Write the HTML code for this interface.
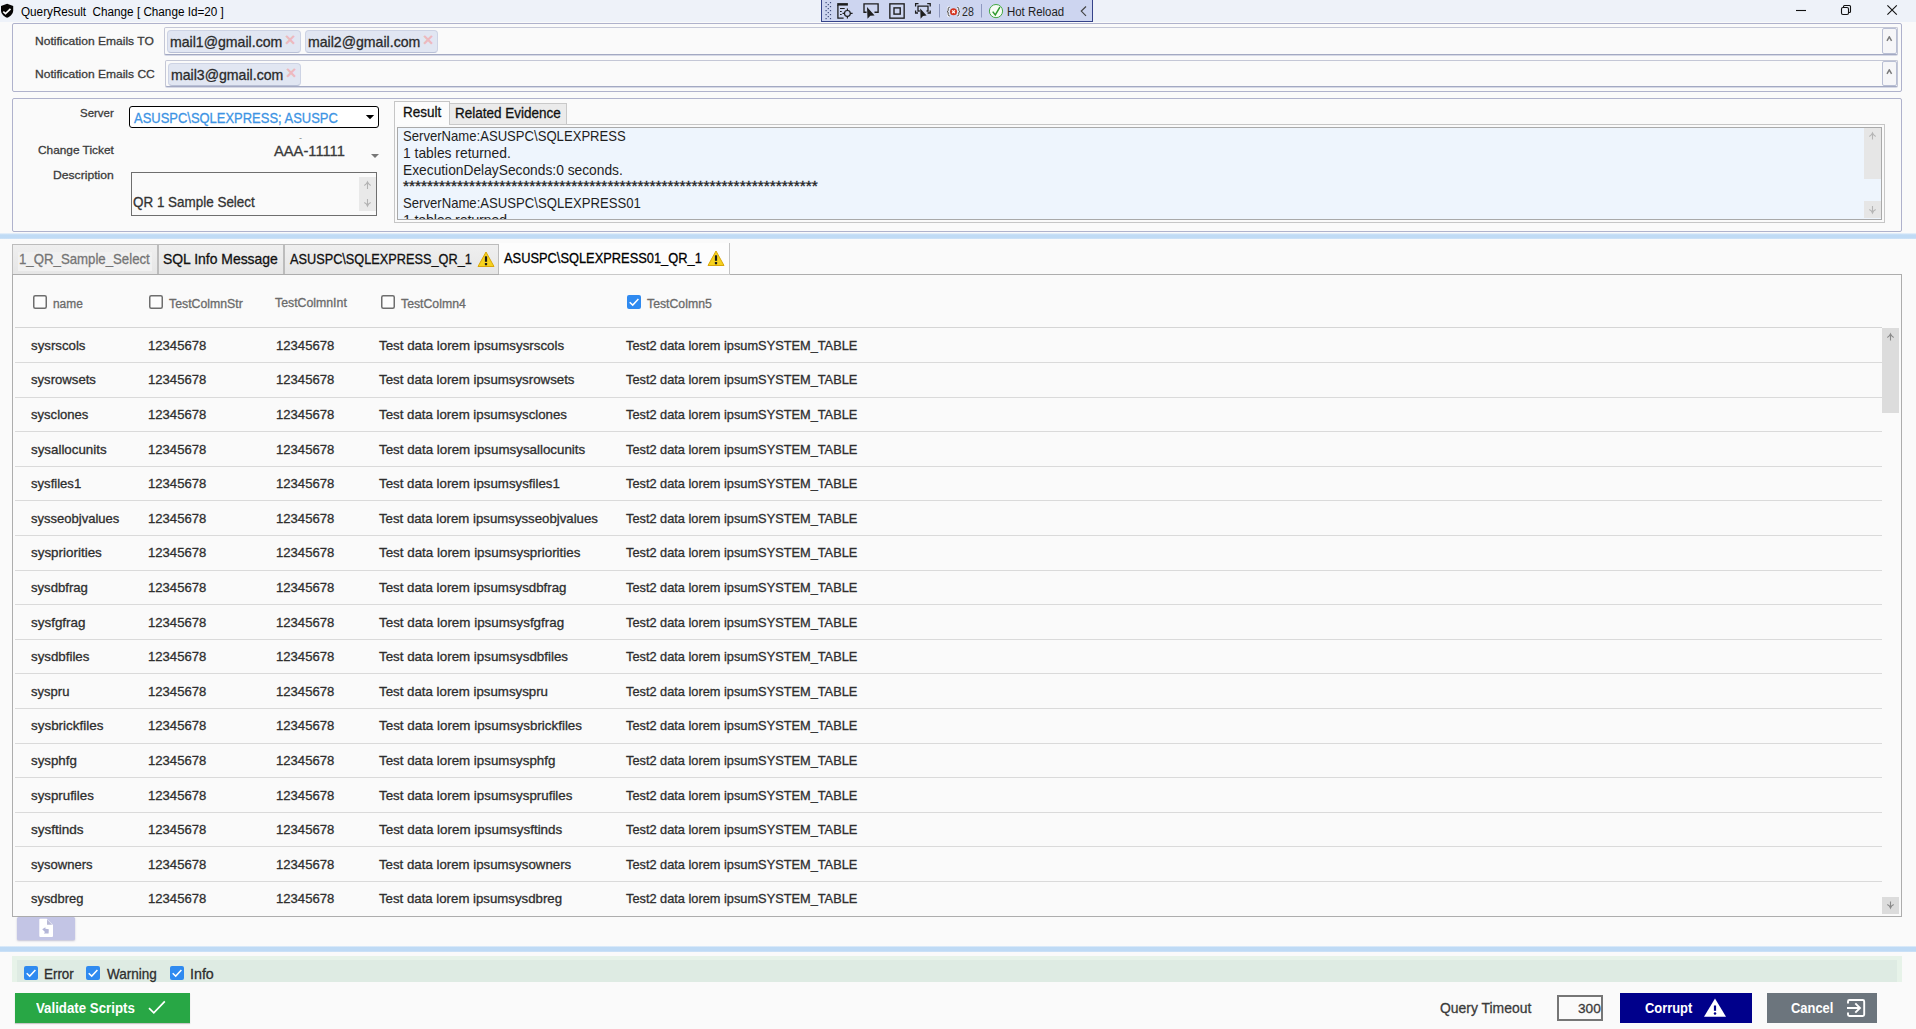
<!DOCTYPE html><html><head><meta charset="utf-8"><title>QueryResult Change</title><style>
html,body{margin:0;padding:0}
body{width:1916px;height:1029px;position:relative;overflow:hidden;background:#fafafa;font-family:"Liberation Sans",sans-serif}
body>div,body>svg,body>span{position:absolute;box-sizing:border-box}
body>div>div,body>div>svg{position:absolute;box-sizing:border-box}
span.t{white-space:pre;display:inline-block;transform-origin:0 50%}
.m{-webkit-text-stroke:0.3px currentColor}

</style></head><body>
<div style="left:0px;top:0px;width:1916px;height:22px;background:#eef2f9"></div>
<svg style="left:0;top:0" width="15" height="22" viewBox="0 0 15 22"><path d="M7.100 3.800 L13.200 6 V10.300 C13.200 13.900 10.600 16.500 7.100 17.800 C3.600 16.500 1 13.900 1 10.300 V6 Z" fill="#050505"/><path d="M3.300 11.700 L5.500 13.700 L10.500 8.800" fill="none" stroke="#fff" stroke-width="1.700"/></svg>
<svg style="left:1790px;top:0" width="120" height="23" viewBox="0 0 120 23"><g fill="none" stroke="#111" stroke-width="1.1"><path d="M6 10.5 H16"/><rect x="51.5" y="7.5" width="7" height="7" rx="1.5"/><path d="M53.5 7.5 V6.5 Q53.5 5.5 54.5 5.5 H59.5 Q60.5 5.5 60.5 6.5 V11.5 Q60.5 12.5 59.5 12.5 H58.5"/><path d="M97.400 5.300 L106.800 14.700 M106.800 5.300 L97.400 14.700"/></g></svg>
<div style="left:821px;top:0px;width:272px;height:22px;background:#cdd5f0;border:1px solid #35438a;border-top:none"></div>
<svg style="left:821px;top:0" width="272" height="22" viewBox="0 0 272 22">
<g fill="#3d4a78"><rect x="4.5" y="2" width="1.2" height="1.2"/><rect x="8.9" y="2" width="1.2" height="1.2"/><rect x="6.7" y="4" width="1.2" height="1.2"/><rect x="4.5" y="6" width="1.2" height="1.2"/><rect x="8.9" y="6" width="1.2" height="1.2"/><rect x="6.7" y="8" width="1.2" height="1.2"/><rect x="4.5" y="10" width="1.2" height="1.2"/><rect x="8.9" y="10" width="1.2" height="1.2"/><rect x="6.7" y="12" width="1.2" height="1.2"/><rect x="4.5" y="14" width="1.2" height="1.2"/><rect x="8.9" y="14" width="1.2" height="1.2"/><rect x="6.7" y="16" width="1.2" height="1.2"/><rect x="4.5" y="18" width="1.2" height="1.2"/><rect x="8.9" y="18" width="1.2" height="1.2"/></g>
<g fill="none" stroke="#1e1e1e" stroke-width="1.350">
<path d="M16.200 4.350 H26.900" stroke-width="2.500"/><path d="M16.900 5 V18.200 H22.600" stroke-width="1.300"/><path d="M19 8.500 H23.700 M19 11.500 H20.700 M19 14.500 H20.700" stroke-width="1"/><circle cx="26.400" cy="13.400" r="2.900" stroke-width="1.150"/><path d="M26.400 8.500 V10.800 M26.400 16 V18.600 M21.500 13.400 H23.800 M29 13.400 H31.600" stroke-width="1.150"/>
<path d="M45.600 12.200 H43 V3.800 H57.100 V12.200 H53.500"/>
<rect x="68.850" y="3.850" width="14.300" height="14.300"/><rect x="73" y="7.900" width="6.200" height="6.200" stroke-width="1.400"/>
<path d="M94.600 6.500 V3.700 H97.500 M106.200 3.700 H109.200 V6.500 M109.200 10.500 V13 H106.500 M94.600 10.500 V13 H97" stroke-width="1.300"/><path d="M98.800 11 H97 V6.200 H107 V11 H105.500" stroke-width="1.300"/>
</g>
<path d="M46 7 L46.500 18.700 L49.300 15.700 L53.600 15.400 Z" fill="#1e1e1e"/>
<path d="M99.200 8.600 L99.600 18.700 L102 16 L105.600 15.400 Z" fill="#1e1e1e"/>
<path d="M118.500 4 V17.500 M160.500 4 V17.500" stroke="#8e98bf" stroke-width="1"/>
<path d="M128.800 7.200 Q127.200 7.200 127.200 8.800 V10.200 Q127.200 11.600 126.100 11.600 Q127.200 11.600 127.200 13 V14.400 Q127.200 16 128.800 16 M136.200 7.200 Q137.800 7.200 137.800 8.800 V10.200 Q137.800 11.600 138.900 11.600 Q137.800 11.600 137.800 13 V14.400 Q137.800 16 136.200 16" fill="none" stroke="#f3f3f8" stroke-width="2.600"/>
<path d="M128.800 7.200 Q127.200 7.200 127.200 8.800 V10.200 Q127.200 11.600 126.100 11.600 Q127.200 11.600 127.200 13 V14.400 Q127.200 16 128.800 16 M136.200 7.200 Q137.800 7.200 137.800 8.800 V10.200 Q137.800 11.600 138.900 11.600 Q137.800 11.600 137.800 13 V14.400 Q137.800 16 136.200 16" fill="none" stroke="#4a4a4a" stroke-width="1"/>
<circle cx="132.500" cy="11.700" r="3.500" fill="#d4341f"/><path d="M131.100 10.300 L133.900 13.100 M133.900 10.300 L131.100 13.100" stroke="#fff" stroke-width="1.200"/>
<circle cx="175" cy="11.100" r="6.600" fill="#f7fcf5" stroke="#43a843" stroke-width="1"/><path d="M171.700 11.600 L174.300 15 L178.900 7.200" fill="none" stroke="#2f9a2f" stroke-width="1.500"/>
<path d="M265 6.500 L260.300 11.100 L265 15.800" fill="none" stroke="#444" stroke-width="1.200"/>
</svg>
<div style="left:12px;top:23px;width:1890px;height:69px;border:1px solid #afb2cc;border-radius:2px;background:#fafafa"></div>
<div style="left:164px;top:27px;width:1734px;height:28px;border:1px solid #c4c7d6;border-bottom:1px solid #a3a9c2;border-radius:2px;background:#fafafa;box-shadow:0 1px 0 #d6d9e6"></div>
<div style="left:167px;top:30px;width:134px;height:23px;background:#e1e6f2;border:1px solid #cdd3e4;border-bottom-color:#b9c0d6;border-radius:4px"></div>
<div style="left:305px;top:30px;width:133px;height:23px;background:#e1e6f2;border:1px solid #cdd3e4;border-bottom-color:#b9c0d6;border-radius:4px"></div>
<div style="left:1882px;top:28px;width:15px;height:26px;border:1px solid #b9bfd4;border-radius:2px;background:#f6f6f8"></div>
<svg style="left:1886px;top:36px" width="7" height="6" viewBox="0 0 7 6"><path d="M1 4.900 L3.300 0.900 L5.600 4.900" fill="none" stroke="#7a7a7a" stroke-width="1.500"/></svg>
<div style="left:165px;top:60px;width:1733px;height:27px;border:1px solid #c4c7d6;border-bottom:1px solid #a3a9c2;border-radius:2px;background:#fafafa;box-shadow:0 1px 0 #d6d9e6"></div>
<div style="left:168px;top:63px;width:133px;height:23px;background:#e1e6f2;border:1px solid #cdd3e4;border-bottom-color:#b9c0d6;border-radius:4px"></div>
<div style="left:1882px;top:61px;width:15px;height:25px;border:1px solid #b9bfd4;border-radius:2px;background:#f6f6f8"></div>
<svg style="left:1886px;top:69px" width="7" height="6" viewBox="0 0 7 6"><path d="M1 4.900 L3.300 0.900 L5.600 4.900" fill="none" stroke="#7a7a7a" stroke-width="1.500"/></svg>
<div style="left:12px;top:98px;width:1890px;height:134px;border:1px solid #afb2cc;border-radius:2px;background:#fafafa"></div>
<div style="left:129px;top:106px;width:250px;height:22px;border:1px solid #000;border-radius:3px;background:#fff"></div>
<svg style="left:365px;top:114px" width="10" height="6" viewBox="0 0 10 6"><path d="M0.800 1 H9.200 L5 5.300 Z" fill="#000"/></svg>
<svg style="left:370px;top:153px" width="10" height="6" viewBox="0 0 10 6"><path d="M1 1 H9 L5 5 Z" fill="#777"/></svg>
<div style="left:131px;top:172px;width:246px;height:44px;border:1px solid #6e6e6e;background:#fafafa"></div>
<div style="left:359px;top:177px;width:17px;height:34px;background:#e9e9e9"></div>
<svg style="left:359px;top:177px" width="16" height="34" viewBox="0 0 16 34" fill="none" stroke="#b2b2b2" stroke-width="1.1"><path d="M8.5 5 V12 M5.3 8.4 Q7.7 7.2 8.5 5 Q9.3 7.2 11.7 8.4"/><path d="M8.5 22 V29 M5.3 25.6 Q7.7 26.8 8.5 29 Q9.3 26.8 11.7 25.6"/></svg>
<div style="left:394px;top:124px;width:1491px;height:99px;border:1px solid #c6c6c6;background:#fafafa"></div>
<div style="left:450px;top:103px;width:117px;height:22px;background:#ebebeb;border:1px solid #c9c9c9;border-left:none"></div>
<div style="left:394px;top:101px;width:56px;height:24px;background:#fcfcfc;border:1px solid #c6c6c6;border-bottom:none"></div>
<div style="left:397px;top:127px;width:1485px;height:93px;border:1px solid #a9a9a9;background:#eef5fd;overflow:hidden"></div>
<div style="left:397px;top:211px;width:300px;height:8px;overflow:hidden"><span id="clip1" style="position:absolute;left:6px;top:-1px;font-size:14.500px;line-height:20px;color:#1e1e1e;white-space:pre;letter-spacing:-0.300px">1 tables returned.</span></div>
<div style="left:1864px;top:128px;width:17px;height:51px;background:#e6e6e6"></div>
<div style="left:1864px;top:201px;width:17px;height:17px;background:#e6e6e6"></div>
<svg style="left:1864px;top:130px" width="17" height="88" viewBox="0 0 17 88" fill="none" stroke="#b5b5b5" stroke-width="1.1"><path d="M8.5 3 V9.5 M5.3 6.4 Q7.7 5.2 8.5 3 Q9.3 5.2 11.7 6.4"/><path d="M8.5 76 V83 M5.3 79.6 Q7.7 80.8 8.5 83 Q9.3 80.8 11.7 79.6"/></svg>
<div style="left:0px;top:233px;width:1916px;height:6px;background:linear-gradient(#eef4fb,#c0dbf5 30%,#c0dbf5 85%,#d8e8f8)"></div>
<div style="left:0px;top:946px;width:1916px;height:6px;background:linear-gradient(#e6f0fa,#bedaf5 25%,#bedaf5 85%,#d8e8f8)"></div>
<div style="left:12px;top:244px;width:146px;height:31px;background:linear-gradient(#efefef,#e6e6e6);border:1px solid #bcbcbc"></div>
<div style="left:158px;top:244px;width:126px;height:31px;background:linear-gradient(#efefef,#e6e6e6);border:1px solid #bcbcbc"></div>
<div style="left:284px;top:244px;width:215px;height:31px;background:linear-gradient(#efefef,#e6e6e6);border:1px solid #bcbcbc"></div>
<div style="left:18px;top:252px;width:134px;height:19px;background:#f1f1f1"></div>
<div style="left:12px;top:274px;width:1890px;height:643px;border:1px solid #adadad;background:#fafafa"></div>
<div style="left:499px;top:243px;width:231px;height:31px;background:#fdfdfd;border-right:1px solid #c4c4c4"></div>
<div style="left:499px;top:274px;width:231px;height:1px;background:#c9c9c9"></div>
<svg style="left:477px;top:251px" width="18" height="17" viewBox="0 0 18 17"><path d="M9 1 L17 15.500 H1 Z" fill="#f6d21e" stroke="#d9a60a" stroke-width="1" stroke-linejoin="round"/><path d="M9 5.300 V10.800" stroke="#1a1a1a" stroke-width="2.200"/><rect x="7.900" y="12" width="2.200" height="2.200" rx="0.500" fill="#1a1a1a"/></svg>
<svg style="left:707px;top:250px" width="18" height="17" viewBox="0 0 18 17"><path d="M9 1 L17 15.500 H1 Z" fill="#f6d21e" stroke="#d9a60a" stroke-width="1" stroke-linejoin="round"/><path d="M9 5.300 V10.800" stroke="#1a1a1a" stroke-width="2.200"/><rect x="7.900" y="12" width="2.200" height="2.200" rx="0.500" fill="#1a1a1a"/></svg>
<svg style="left:33px;top:295px" width="14" height="14" viewBox="0 0 14 14"><rect x="0.750" y="0.750" width="12.500" height="12.500" rx="1.500" fill="#fdfdfd" stroke="#6e6e6e" stroke-width="1.500"/></svg>
<svg style="left:149px;top:295px" width="14" height="14" viewBox="0 0 14 14"><rect x="0.750" y="0.750" width="12.500" height="12.500" rx="1.500" fill="#fdfdfd" stroke="#6e6e6e" stroke-width="1.500"/></svg>
<svg style="left:381px;top:295px" width="14" height="14" viewBox="0 0 14 14"><rect x="0.750" y="0.750" width="12.500" height="12.500" rx="1.500" fill="#fdfdfd" stroke="#6e6e6e" stroke-width="1.500"/></svg>
<svg style="left:627px;top:295px" width="14" height="14" viewBox="0 0 14 14"><rect x="0" y="0" width="14" height="14" rx="2" fill="#2f8af0"/><path d="M2.700 7.200 L5.700 10.100 L11.400 3.900" fill="none" stroke="#fff" stroke-width="1.450"/></svg>
<div style="left:15px;top:327px;width:1867px;height:1px;background:#d5d5d5"></div>
<div style="left:15px;top:362px;width:1867px;height:1px;background:#dadada"></div>
<div style="left:15px;top:397px;width:1867px;height:1px;background:#dadada"></div>
<div style="left:15px;top:431px;width:1867px;height:1px;background:#dadada"></div>
<div style="left:15px;top:466px;width:1867px;height:1px;background:#dadada"></div>
<div style="left:15px;top:500px;width:1867px;height:1px;background:#dadada"></div>
<div style="left:15px;top:535px;width:1867px;height:1px;background:#dadada"></div>
<div style="left:15px;top:570px;width:1867px;height:1px;background:#dadada"></div>
<div style="left:15px;top:604px;width:1867px;height:1px;background:#dadada"></div>
<div style="left:15px;top:639px;width:1867px;height:1px;background:#dadada"></div>
<div style="left:15px;top:673px;width:1867px;height:1px;background:#dadada"></div>
<div style="left:15px;top:708px;width:1867px;height:1px;background:#dadada"></div>
<div style="left:15px;top:743px;width:1867px;height:1px;background:#dadada"></div>
<div style="left:15px;top:777px;width:1867px;height:1px;background:#dadada"></div>
<div style="left:15px;top:812px;width:1867px;height:1px;background:#dadada"></div>
<div style="left:15px;top:846px;width:1867px;height:1px;background:#dadada"></div>
<div style="left:15px;top:881px;width:1867px;height:1px;background:#dadada"></div>
<div style="left:1882px;top:328px;width:17px;height:85px;background:#dcdcdc"></div>
<div style="left:1882px;top:897px;width:17px;height:17px;background:#dcdcdc"></div>
<svg style="left:1882px;top:328px" width="17" height="590" viewBox="0 0 17 590" fill="none" stroke="#8a8a8a" stroke-width="1.100"><path d="M8.5 6 V12.5 M5.3 9.4 Q7.7 8.2 8.5 6 Q9.3 8.2 11.7 9.4"/><path d="M8.5 573.5 V580 M5.3 576.6 Q7.7 577.8 8.5 580 Q9.3 577.8 11.7 576.6"/></svg>
<div style="left:17px;top:917px;width:58px;height:23px;background:#c3c5e5;border-radius:1.500px;box-shadow:0 1px 2px rgba(90,90,140,.35)"></div>
<svg style="left:38px;top:917px" width="17" height="22" viewBox="0 0 17 22"><path d="M2.300 1.800 H8.700 L15 8 V19 Q15 20 14 20 H2.300 Q1.300 20 1.300 19 V2.800 Q1.300 1.800 2.300 1.800 Z" fill="#fff"/><path d="M9 2.600 V7.800 H14.200 Z" fill="#b9bad6"/><path d="M4.200 12.300 L7.400 10.300 L7.400 11.800 L10.800 12.300 L10.600 16.600 L5.800 16.600 L7 15 Z" fill="#b4b6d8"/></svg>
<div style="left:12px;top:956px;width:1890px;height:26px;background:#e7f3e9"></div>
<div style="left:16.5px;top:960px;width:1880.5px;height:22px;background:#deebe3"></div>
<svg style="left:24px;top:966px" width="14" height="14" viewBox="0 0 14 14"><rect x="0" y="0" width="14" height="14" rx="2" fill="#2f8af0"/><path d="M2.700 7.200 L5.700 10.100 L11.400 3.900" fill="none" stroke="#fff" stroke-width="1.450"/></svg>
<svg style="left:86px;top:966px" width="14" height="14" viewBox="0 0 14 14"><rect x="0" y="0" width="14" height="14" rx="2" fill="#2f8af0"/><path d="M2.700 7.200 L5.700 10.100 L11.400 3.900" fill="none" stroke="#fff" stroke-width="1.450"/></svg>
<svg style="left:170px;top:966px" width="14" height="14" viewBox="0 0 14 14"><rect x="0" y="0" width="14" height="14" rx="2" fill="#2f8af0"/><path d="M2.700 7.200 L5.700 10.100 L11.400 3.900" fill="none" stroke="#fff" stroke-width="1.450"/></svg>
<div style="left:15px;top:993px;width:175px;height:30px;background:#28a745;box-shadow:0 1px 1px rgba(0,0,0,.2)"></div>
<svg style="left:147px;top:999px" width="20" height="17" viewBox="0 0 20 17"><path d="M2 9.200 L6.800 13.800 L17.800 2.300" fill="none" stroke="#fff" stroke-width="1.700"/></svg>
<div style="left:1557px;top:995px;width:46px;height:26px;border:2px solid #767676;background:#fafafa"></div>
<div style="left:1620px;top:993px;width:132px;height:30px;background:#00008b"></div>
<svg style="left:1703px;top:998px" width="24" height="20" viewBox="0 0 24 20"><path d="M12 0.600 L23 18.800 H1 Z" fill="#fff"/><path d="M12 7.500 V12.800" stroke="#00008b" stroke-width="2.200"/><circle cx="12" cy="15.600" r="1.250" fill="#00008b"/></svg>
<div style="left:1767px;top:993px;width:110px;height:30px;background:#6c757d"></div>
<svg style="left:1845px;top:997px" width="22" height="22" viewBox="0 0 22 22" fill="none" stroke="#fff" stroke-width="1.900"><path d="M3 6.500 V4.400 Q3 3 4.400 3 H17.800 Q19.200 3 19.200 4.400 V17.600 Q19.200 19 17.800 19 H4.400 Q3 19 3 17.600 V15.500" stroke-linejoin="round"/><path d="M2 11 H14.500 M10.300 6.300 L15 11 L10.300 15.700"/></svg>
<span class="t" id="t0" style="left:21px;top:3.9px;font-size:12px;line-height:17px;color:#000;transform:scaleX(0.9760);">QueryResult  Change [ Change Id=20 ]</span>
<span class="t" id="t1" style="left:962.3px;top:3.9px;font-size:12px;line-height:17px;color:#2a2a2a;transform:scaleX(0.8833);">28</span>
<span class="t" id="t2" style="left:1006.5px;top:3.9px;font-size:12px;line-height:17px;color:#1e1e1e;transform:scaleX(0.9509);">Hot Reload</span>
<span class="t m" id="t3" style="left:170.3px;top:31.8px;font-size:14.5px;line-height:20px;color:#2a2a2a;transform:scaleX(0.9727);">mail1@gmail.com</span>
<span class="t" id="t4" style="left:284.8px;top:27.0px;font-size:18.5px;line-height:26px;color:#edb9be;font-weight:700;">×</span>
<span class="t m" id="t5" style="left:308.3px;top:31.8px;font-size:14.5px;line-height:20px;color:#2a2a2a;transform:scaleX(0.9727);">mail2@gmail.com</span>
<span class="t" id="t6" style="left:422.8px;top:27.0px;font-size:18.5px;line-height:26px;color:#edb9be;font-weight:700;">×</span>
<span class="t m" id="t7" style="left:171.3px;top:64.6px;font-size:14.5px;line-height:20px;color:#2a2a2a;transform:scaleX(0.9727);">mail3@gmail.com</span>
<span class="t" id="t8" style="left:285.8px;top:60.0px;font-size:18.5px;line-height:26px;color:#edb9be;font-weight:700;">×</span>
<span class="t m" id="t9" style="left:34.5px;top:33.0px;font-size:11.6px;line-height:16px;color:#3c3c3c;transform:scaleX(1.0397);">Notification Emails TO</span>
<span class="t m" id="t10" style="left:34.5px;top:66.0px;font-size:11.6px;line-height:16px;color:#3c3c3c;transform:scaleX(1.0388);">Notification Emails CC</span>
<span class="t m" id="t11" style="left:80px;top:105.0px;font-size:11.6px;line-height:16px;color:#3c3c3c;transform:scaleX(0.9896);">Server</span>
<span class="t m" id="t12" style="left:38px;top:142.0px;font-size:11.6px;line-height:16px;color:#3c3c3c;transform:scaleX(1.0226);">Change Ticket</span>
<span class="t m" id="t13" style="left:53px;top:167.0px;font-size:11.6px;line-height:16px;color:#3c3c3c;transform:scaleX(1.0483);">Description</span>
<span class="t m" id="t14" style="left:134px;top:108.0px;font-size:14.5px;line-height:20px;color:#3d94e4;transform:scaleX(0.8936);">ASUSPC\SQLEXPRESS; ASUSPC</span>
<span class="t m" id="t15" style="left:274px;top:141.0px;font-size:14.5px;line-height:20px;color:#3a3a3a;transform:scaleX(1.0135);">AAA-11111</span>
<span class="t" id="t16" style="left:299px;top:131.5px;font-size:9px;line-height:13px;color:#888;">-</span>
<span class="t m" id="t17" style="left:133px;top:192.0px;font-size:14.5px;line-height:20px;color:#333;transform:scaleX(0.9271);">QR 1 Sample Select</span>
<span class="t m" id="t18" style="left:403px;top:102.2px;font-size:14.5px;line-height:20px;color:#111;transform:scaleX(0.9317);">Result</span>
<span class="t m" id="t19" style="left:454.5px;top:103.2px;font-size:14.5px;line-height:20px;color:#111;transform:scaleX(0.9307);">Related Evidence</span>
<span class="t" id="t20" style="left:402.8px;top:126.0px;font-size:14.5px;line-height:20px;color:#1e1e1e;transform:scaleX(0.9035);">ServerName:ASUSPC\SQLEXPRESS</span>
<span class="t" id="t21" style="left:402.8px;top:142.8px;font-size:14.5px;line-height:20px;color:#1e1e1e;transform:scaleX(0.9552);">1 tables returned.</span>
<span class="t" id="t22" style="left:402.8px;top:159.8px;font-size:14.5px;line-height:20px;color:#1e1e1e;transform:scaleX(0.9501);">ExecutionDelaySeconds:0 seconds.</span>
<span class="t m" id="t23" style="left:402.8px;top:176.3px;font-size:14.5px;line-height:20px;color:#1e1e1e;transform:scaleX(1.0653);">*********************************************************************</span>
<span class="t" id="t24" style="left:402.8px;top:192.6px;font-size:14.5px;line-height:20px;color:#1e1e1e;transform:scaleX(0.9052);">ServerName:ASUSPC\SQLEXPRESS01</span>
<span class="t m" id="t25" style="left:19px;top:249.0px;font-size:14.5px;line-height:20px;color:#757575;transform:scaleX(0.9116);">1_QR_Sample_Select</span>
<span class="t m" id="t26" style="left:163px;top:249.0px;font-size:14.5px;line-height:20px;color:#111;transform:scaleX(0.9602);">SQL Info Message</span>
<span class="t m" id="t27" style="left:290px;top:249.0px;font-size:14.5px;line-height:20px;color:#111;transform:scaleX(0.8777);">ASUSPC\SQLEXPRESS_QR_1</span>
<span class="t m" id="t28" style="left:504px;top:248.0px;font-size:14.5px;line-height:20px;color:#000;transform:scaleX(0.8860);">ASUSPC\SQLEXPRESS01_QR_1</span>
<span class="t m" id="t29" style="left:53px;top:295.9px;font-size:12px;line-height:17px;color:#6b6b6b;transform:scaleX(0.9923);">name</span>
<span class="t m" id="t30" style="left:169px;top:295.9px;font-size:12px;line-height:17px;color:#6b6b6b;transform:scaleX(1.0246);">TestColmnStr</span>
<span class="t m" id="t31" style="left:275px;top:294.9px;font-size:12px;line-height:17px;color:#6b6b6b;transform:scaleX(1.0253);">TestColmnInt</span>
<span class="t m" id="t32" style="left:401px;top:295.9px;font-size:12px;line-height:17px;color:#6b6b6b;transform:scaleX(1.0227);">TestColmn4</span>
<span class="t m" id="t33" style="left:647px;top:295.9px;font-size:12px;line-height:17px;color:#6b6b6b;transform:scaleX(1.0227);">TestColmn5</span>
<span class="t m" id="t34" style="left:31px;top:337.0px;font-size:13px;line-height:18px;color:#2e2e2e;transform:scaleX(1.0196);">sysrscols</span>
<span class="t m" id="t35" style="left:147.5px;top:337.0px;font-size:13px;line-height:18px;color:#2e2e2e;transform:scaleX(1.0079);">12345678</span>
<span class="t m" id="t36" style="left:275.5px;top:337.0px;font-size:13px;line-height:18px;color:#2e2e2e;transform:scaleX(1.0079);">12345678</span>
<span class="t m" id="t37" style="left:379px;top:337.0px;font-size:13px;line-height:18px;color:#2e2e2e;transform:scaleX(1.0248);">Test data lorem ipsumsysrscols</span>
<span class="t m" id="t38" style="left:625.5px;top:337.0px;font-size:13px;line-height:18px;color:#2e2e2e;transform:scaleX(0.9830);">Test2 data lorem ipsumSYSTEM_TABLE</span>
<span class="t m" id="t39" style="left:31px;top:371.0px;font-size:13px;line-height:18px;color:#2e2e2e;transform:scaleX(1.0094);">sysrowsets</span>
<span class="t m" id="t40" style="left:147.5px;top:371.0px;font-size:13px;line-height:18px;color:#2e2e2e;transform:scaleX(1.0079);">12345678</span>
<span class="t m" id="t41" style="left:275.5px;top:371.0px;font-size:13px;line-height:18px;color:#2e2e2e;transform:scaleX(1.0079);">12345678</span>
<span class="t m" id="t42" style="left:379px;top:371.0px;font-size:13px;line-height:18px;color:#2e2e2e;transform:scaleX(1.0211);">Test data lorem ipsumsysrowsets</span>
<span class="t m" id="t43" style="left:625.5px;top:371.0px;font-size:13px;line-height:18px;color:#2e2e2e;transform:scaleX(0.9830);">Test2 data lorem ipsumSYSTEM_TABLE</span>
<span class="t m" id="t44" style="left:31px;top:406.0px;font-size:13px;line-height:18px;color:#2e2e2e;transform:scaleX(1.0056);">sysclones</span>
<span class="t m" id="t45" style="left:147.5px;top:406.0px;font-size:13px;line-height:18px;color:#2e2e2e;transform:scaleX(1.0079);">12345678</span>
<span class="t m" id="t46" style="left:275.5px;top:406.0px;font-size:13px;line-height:18px;color:#2e2e2e;transform:scaleX(1.0079);">12345678</span>
<span class="t m" id="t47" style="left:379px;top:406.0px;font-size:13px;line-height:18px;color:#2e2e2e;transform:scaleX(1.0204);">Test data lorem ipsumsysclones</span>
<span class="t m" id="t48" style="left:625.5px;top:406.0px;font-size:13px;line-height:18px;color:#2e2e2e;transform:scaleX(0.9830);">Test2 data lorem ipsumSYSTEM_TABLE</span>
<span class="t m" id="t49" style="left:31px;top:441.0px;font-size:13px;line-height:18px;color:#2e2e2e;transform:scaleX(1.0257);">sysallocunits</span>
<span class="t m" id="t50" style="left:147.5px;top:441.0px;font-size:13px;line-height:18px;color:#2e2e2e;transform:scaleX(1.0079);">12345678</span>
<span class="t m" id="t51" style="left:275.5px;top:441.0px;font-size:13px;line-height:18px;color:#2e2e2e;transform:scaleX(1.0079);">12345678</span>
<span class="t m" id="t52" style="left:379px;top:441.0px;font-size:13px;line-height:18px;color:#2e2e2e;transform:scaleX(1.0266);">Test data lorem ipsumsysallocunits</span>
<span class="t m" id="t53" style="left:625.5px;top:441.0px;font-size:13px;line-height:18px;color:#2e2e2e;transform:scaleX(0.9830);">Test2 data lorem ipsumSYSTEM_TABLE</span>
<span class="t m" id="t54" style="left:31px;top:475.0px;font-size:13px;line-height:18px;color:#2e2e2e;transform:scaleX(1.0068);">sysfiles1</span>
<span class="t m" id="t55" style="left:147.5px;top:475.0px;font-size:13px;line-height:18px;color:#2e2e2e;transform:scaleX(1.0079);">12345678</span>
<span class="t m" id="t56" style="left:275.5px;top:475.0px;font-size:13px;line-height:18px;color:#2e2e2e;transform:scaleX(1.0079);">12345678</span>
<span class="t m" id="t57" style="left:379px;top:475.0px;font-size:13px;line-height:18px;color:#2e2e2e;transform:scaleX(1.0214);">Test data lorem ipsumsysfiles1</span>
<span class="t m" id="t58" style="left:625.5px;top:475.0px;font-size:13px;line-height:18px;color:#2e2e2e;transform:scaleX(0.9830);">Test2 data lorem ipsumSYSTEM_TABLE</span>
<span class="t m" id="t59" style="left:31px;top:510.0px;font-size:13px;line-height:18px;color:#2e2e2e;transform:scaleX(1.0016);">sysseobjvalues</span>
<span class="t m" id="t60" style="left:147.5px;top:510.0px;font-size:13px;line-height:18px;color:#2e2e2e;transform:scaleX(1.0079);">12345678</span>
<span class="t m" id="t61" style="left:275.5px;top:510.0px;font-size:13px;line-height:18px;color:#2e2e2e;transform:scaleX(1.0079);">12345678</span>
<span class="t m" id="t62" style="left:379px;top:510.0px;font-size:13px;line-height:18px;color:#2e2e2e;transform:scaleX(1.0166);">Test data lorem ipsumsysseobjvalues</span>
<span class="t m" id="t63" style="left:625.5px;top:510.0px;font-size:13px;line-height:18px;color:#2e2e2e;transform:scaleX(0.9830);">Test2 data lorem ipsumSYSTEM_TABLE</span>
<span class="t m" id="t64" style="left:31px;top:544.0px;font-size:13px;line-height:18px;color:#2e2e2e;transform:scaleX(1.0317);">syspriorities</span>
<span class="t m" id="t65" style="left:147.5px;top:544.0px;font-size:13px;line-height:18px;color:#2e2e2e;transform:scaleX(1.0079);">12345678</span>
<span class="t m" id="t66" style="left:275.5px;top:544.0px;font-size:13px;line-height:18px;color:#2e2e2e;transform:scaleX(1.0079);">12345678</span>
<span class="t m" id="t67" style="left:379px;top:544.0px;font-size:13px;line-height:18px;color:#2e2e2e;transform:scaleX(1.0286);">Test data lorem ipsumsyspriorities</span>
<span class="t m" id="t68" style="left:625.5px;top:544.0px;font-size:13px;line-height:18px;color:#2e2e2e;transform:scaleX(0.9830);">Test2 data lorem ipsumSYSTEM_TABLE</span>
<span class="t m" id="t69" style="left:31px;top:579.0px;font-size:13px;line-height:18px;color:#2e2e2e;transform:scaleX(1.0093);">sysdbfrag</span>
<span class="t m" id="t70" style="left:147.5px;top:579.0px;font-size:13px;line-height:18px;color:#2e2e2e;transform:scaleX(1.0079);">12345678</span>
<span class="t m" id="t71" style="left:275.5px;top:579.0px;font-size:13px;line-height:18px;color:#2e2e2e;transform:scaleX(1.0079);">12345678</span>
<span class="t m" id="t72" style="left:379px;top:579.0px;font-size:13px;line-height:18px;color:#2e2e2e;transform:scaleX(1.0216);">Test data lorem ipsumsysdbfrag</span>
<span class="t m" id="t73" style="left:625.5px;top:579.0px;font-size:13px;line-height:18px;color:#2e2e2e;transform:scaleX(0.9830);">Test2 data lorem ipsumSYSTEM_TABLE</span>
<span class="t m" id="t74" style="left:31px;top:614.0px;font-size:13px;line-height:18px;color:#2e2e2e;transform:scaleX(1.0332);">sysfgfrag</span>
<span class="t m" id="t75" style="left:147.5px;top:614.0px;font-size:13px;line-height:18px;color:#2e2e2e;transform:scaleX(1.0079);">12345678</span>
<span class="t m" id="t76" style="left:275.5px;top:614.0px;font-size:13px;line-height:18px;color:#2e2e2e;transform:scaleX(1.0079);">12345678</span>
<span class="t m" id="t77" style="left:379px;top:614.0px;font-size:13px;line-height:18px;color:#2e2e2e;transform:scaleX(1.0289);">Test data lorem ipsumsysfgfrag</span>
<span class="t m" id="t78" style="left:625.5px;top:614.0px;font-size:13px;line-height:18px;color:#2e2e2e;transform:scaleX(0.9830);">Test2 data lorem ipsumSYSTEM_TABLE</span>
<span class="t m" id="t79" style="left:31px;top:648.0px;font-size:13px;line-height:18px;color:#2e2e2e;transform:scaleX(1.0232);">sysdbfiles</span>
<span class="t m" id="t80" style="left:147.5px;top:648.0px;font-size:13px;line-height:18px;color:#2e2e2e;transform:scaleX(1.0079);">12345678</span>
<span class="t m" id="t81" style="left:275.5px;top:648.0px;font-size:13px;line-height:18px;color:#2e2e2e;transform:scaleX(1.0079);">12345678</span>
<span class="t m" id="t82" style="left:379px;top:648.0px;font-size:13px;line-height:18px;color:#2e2e2e;transform:scaleX(1.0258);">Test data lorem ipsumsysdbfiles</span>
<span class="t m" id="t83" style="left:625.5px;top:648.0px;font-size:13px;line-height:18px;color:#2e2e2e;transform:scaleX(0.9830);">Test2 data lorem ipsumSYSTEM_TABLE</span>
<span class="t m" id="t84" style="left:31px;top:683.0px;font-size:13px;line-height:18px;color:#2e2e2e;transform:scaleX(1.0027);">syspru</span>
<span class="t m" id="t85" style="left:147.5px;top:683.0px;font-size:13px;line-height:18px;color:#2e2e2e;transform:scaleX(1.0079);">12345678</span>
<span class="t m" id="t86" style="left:275.5px;top:683.0px;font-size:13px;line-height:18px;color:#2e2e2e;transform:scaleX(1.0079);">12345678</span>
<span class="t m" id="t87" style="left:379px;top:683.0px;font-size:13px;line-height:18px;color:#2e2e2e;transform:scaleX(1.0214);">Test data lorem ipsumsyspru</span>
<span class="t m" id="t88" style="left:625.5px;top:683.0px;font-size:13px;line-height:18px;color:#2e2e2e;transform:scaleX(0.9830);">Test2 data lorem ipsumSYSTEM_TABLE</span>
<span class="t m" id="t89" style="left:31px;top:717.0px;font-size:13px;line-height:18px;color:#2e2e2e;transform:scaleX(1.0331);">sysbrickfiles</span>
<span class="t m" id="t90" style="left:147.5px;top:717.0px;font-size:13px;line-height:18px;color:#2e2e2e;transform:scaleX(1.0079);">12345678</span>
<span class="t m" id="t91" style="left:275.5px;top:717.0px;font-size:13px;line-height:18px;color:#2e2e2e;transform:scaleX(1.0079);">12345678</span>
<span class="t m" id="t92" style="left:379px;top:717.0px;font-size:13px;line-height:18px;color:#2e2e2e;transform:scaleX(1.0292);">Test data lorem ipsumsysbrickfiles</span>
<span class="t m" id="t93" style="left:625.5px;top:717.0px;font-size:13px;line-height:18px;color:#2e2e2e;transform:scaleX(0.9830);">Test2 data lorem ipsumSYSTEM_TABLE</span>
<span class="t m" id="t94" style="left:31px;top:752.0px;font-size:13px;line-height:18px;color:#2e2e2e;transform:scaleX(1.0220);">sysphfg</span>
<span class="t m" id="t95" style="left:147.5px;top:752.0px;font-size:13px;line-height:18px;color:#2e2e2e;transform:scaleX(1.0079);">12345678</span>
<span class="t m" id="t96" style="left:275.5px;top:752.0px;font-size:13px;line-height:18px;color:#2e2e2e;transform:scaleX(1.0079);">12345678</span>
<span class="t m" id="t97" style="left:379px;top:752.0px;font-size:13px;line-height:18px;color:#2e2e2e;transform:scaleX(1.0258);">Test data lorem ipsumsysphfg</span>
<span class="t m" id="t98" style="left:625.5px;top:752.0px;font-size:13px;line-height:18px;color:#2e2e2e;transform:scaleX(0.9830);">Test2 data lorem ipsumSYSTEM_TABLE</span>
<span class="t m" id="t99" style="left:31px;top:787.0px;font-size:13px;line-height:18px;color:#2e2e2e;transform:scaleX(1.0224);">sysprufiles</span>
<span class="t m" id="t100" style="left:147.5px;top:787.0px;font-size:13px;line-height:18px;color:#2e2e2e;transform:scaleX(1.0079);">12345678</span>
<span class="t m" id="t101" style="left:275.5px;top:787.0px;font-size:13px;line-height:18px;color:#2e2e2e;transform:scaleX(1.0079);">12345678</span>
<span class="t m" id="t102" style="left:379px;top:787.0px;font-size:13px;line-height:18px;color:#2e2e2e;transform:scaleX(1.0256);">Test data lorem ipsumsysprufiles</span>
<span class="t m" id="t103" style="left:625.5px;top:787.0px;font-size:13px;line-height:18px;color:#2e2e2e;transform:scaleX(0.9830);">Test2 data lorem ipsumSYSTEM_TABLE</span>
<span class="t m" id="t104" style="left:31px;top:821.0px;font-size:13px;line-height:18px;color:#2e2e2e;transform:scaleX(1.0400);">sysftinds</span>
<span class="t m" id="t105" style="left:147.5px;top:821.0px;font-size:13px;line-height:18px;color:#2e2e2e;transform:scaleX(1.0079);">12345678</span>
<span class="t m" id="t106" style="left:275.5px;top:821.0px;font-size:13px;line-height:18px;color:#2e2e2e;transform:scaleX(1.0079);">12345678</span>
<span class="t m" id="t107" style="left:379px;top:821.0px;font-size:13px;line-height:18px;color:#2e2e2e;transform:scaleX(1.0308);">Test data lorem ipsumsysftinds</span>
<span class="t m" id="t108" style="left:625.5px;top:821.0px;font-size:13px;line-height:18px;color:#2e2e2e;transform:scaleX(0.9830);">Test2 data lorem ipsumSYSTEM_TABLE</span>
<span class="t m" id="t109" style="left:31px;top:856.0px;font-size:13px;line-height:18px;color:#2e2e2e;transform:scaleX(1.0029);">sysowners</span>
<span class="t m" id="t110" style="left:147.5px;top:856.0px;font-size:13px;line-height:18px;color:#2e2e2e;transform:scaleX(1.0079);">12345678</span>
<span class="t m" id="t111" style="left:275.5px;top:856.0px;font-size:13px;line-height:18px;color:#2e2e2e;transform:scaleX(1.0079);">12345678</span>
<span class="t m" id="t112" style="left:379px;top:856.0px;font-size:13px;line-height:18px;color:#2e2e2e;transform:scaleX(1.0192);">Test data lorem ipsumsysowners</span>
<span class="t m" id="t113" style="left:625.5px;top:856.0px;font-size:13px;line-height:18px;color:#2e2e2e;transform:scaleX(0.9830);">Test2 data lorem ipsumSYSTEM_TABLE</span>
<span class="t m" id="t114" style="left:31px;top:890.0px;font-size:13px;line-height:18px;color:#2e2e2e;transform:scaleX(0.9934);">sysdbreg</span>
<span class="t m" id="t115" style="left:147.5px;top:890.0px;font-size:13px;line-height:18px;color:#2e2e2e;transform:scaleX(1.0079);">12345678</span>
<span class="t m" id="t116" style="left:275.5px;top:890.0px;font-size:13px;line-height:18px;color:#2e2e2e;transform:scaleX(1.0079);">12345678</span>
<span class="t m" id="t117" style="left:379px;top:890.0px;font-size:13px;line-height:18px;color:#2e2e2e;transform:scaleX(1.0171);">Test data lorem ipsumsysdbreg</span>
<span class="t m" id="t118" style="left:625.5px;top:890.0px;font-size:13px;line-height:18px;color:#2e2e2e;transform:scaleX(0.9830);">Test2 data lorem ipsumSYSTEM_TABLE</span>
<span class="t m" id="t119" style="left:44px;top:964.0px;font-size:14.5px;line-height:20px;color:#2e2e2e;transform:scaleX(0.9245);">Error</span>
<span class="t m" id="t120" style="left:107px;top:964.0px;font-size:14.5px;line-height:20px;color:#2e2e2e;transform:scaleX(0.9314);">Warning</span>
<span class="t m" id="t121" style="left:190px;top:964.0px;font-size:14.5px;line-height:20px;color:#2e2e2e;transform:scaleX(0.9840);">Info</span>
<span class="t" id="t122" style="left:36px;top:998.0px;font-size:14px;line-height:20px;color:#fff;font-weight:700;transform:scaleX(0.9474);">Validate Scripts</span>
<span class="t m" id="t123" style="left:1440px;top:998.0px;font-size:14.5px;line-height:20px;color:#3a3a3a;transform:scaleX(0.9601);">Query Timeout</span>
<span class="t m" id="t124" style="left:1577.5px;top:1000.1px;font-size:13px;line-height:18px;color:#3a3a3a;transform:scaleX(1.0505);">300</span>
<span class="t" id="t125" style="left:1645.3px;top:998.0px;font-size:14px;line-height:20px;color:#fff;font-weight:700;transform:scaleX(0.9215);">Corrupt</span>
<span class="t" id="t126" style="left:1791.3px;top:998.0px;font-size:14px;line-height:20px;color:#fff;font-weight:700;transform:scaleX(0.9233);">Cancel</span>
</body></html>
